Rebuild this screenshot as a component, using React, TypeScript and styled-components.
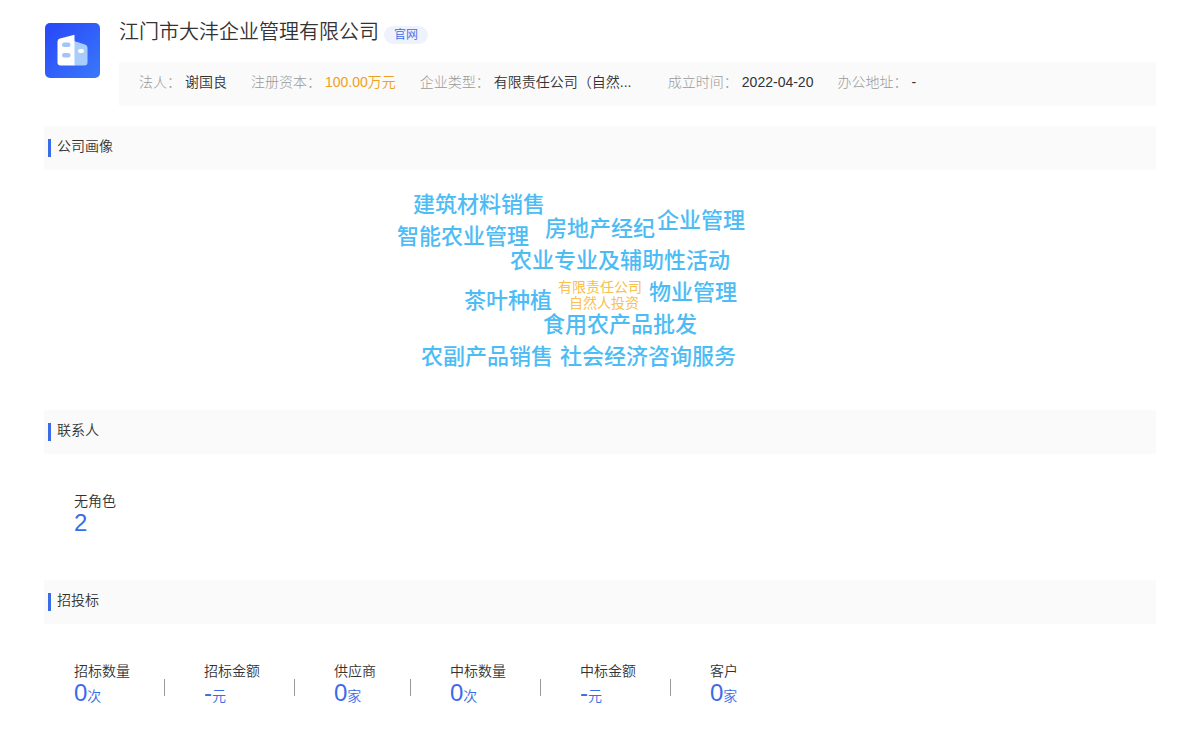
import React from "react";
import styled, { createGlobalStyle } from "styled-components";

const GlobalStyle = createGlobalStyle`
  *, *::before, *::after { box-sizing: border-box; }
  body {
    margin: 0;
    background: #fff;
    color: #333;
    font: 14px/20px "Liberation Sans", "Noto Sans CJK SC", sans-serif;
    font-weight: 350;
  }
  h1, h2, p, dl, dt, dd, ul { margin: 0; padding: 0; font-weight: 350; }
`;

const Page = styled.main`
  padding: 20px 44px;
`;

const Header = styled.header`
  display: flex;
  align-items: flex-start;
  gap: 19px;
  padding-left: 1px;
`;

const Logo = styled.svg`
  flex: none;
  width: 55px;
  height: 55px;
  margin-top: 3px;
`;

const Summary = styled.div`
  flex: 1;
  min-width: 0;
`;

const TitleRow = styled.div`
  display: flex;
  align-items: center;
  gap: 5px;
  height: 30px;
  margin-bottom: 12px;
`;

const CompanyName = styled.h1`
  font-size: 20px;
  line-height: 24px;
  padding-bottom: 6px;
`;

const SiteLink = styled.a`
  padding: 0 10px;
  border-radius: 9px;
  background: #edf2fd;
  color: #3a6be8;
  font-size: 12px;
  line-height: 18px;
  text-decoration: none;
`;

const Facts = styled.dl`
  display: flex;
  flex-wrap: wrap;
  column-gap: 24px;
  padding: 10px 20px 14px;
  background: #fafafa;
`;

const Fact = styled.div`
  display: flex;
  gap: 4px;
`;

const FactLabel = styled.dt`
  color: #999;
  && { font-weight: 300; }
`;

const FactValue = styled.dd<{ $accent?: boolean; $fixed?: boolean }>`
  width: ${(p) => (p.$fixed ? "150px" : "auto")};
  white-space: nowrap;
  color: ${(p) => (p.$accent ? "#f0a020" : "#333")};
`;

const Section = styled.section`
  margin-top: 20px;
`;

const SectionTitle = styled.h2`
  display: flex;
  align-items: center;
  height: 44px;
  padding-left: 4px;
  background: #fafafa;
  font-size: 14px;

  &::before {
    content: "";
    width: 3px;
    height: 18px;
    margin-right: 6px;
    background: #3a6be8;
  }

  span { padding-bottom: 4px; }
`;

const Cloud = styled.div`
  position: relative;
  width: 408px;
  height: 220px;
  margin: 0 auto;
`;

const Word = styled.span<{ $x: number; $y: number }>`
  position: absolute;
  left: ${(p) => p.$x}px;
  top: ${(p) => p.$y}px;
  color: #4dbcf5;
  font-size: 22px;
  line-height: 32px;
  font-weight: 500;
  white-space: nowrap;
`;

const CoreWord = styled(Word)`
  color: #f9c04d;
  font-size: 14px;
  line-height: 16px;
  font-weight: 400;
  text-align: center;
  white-space: pre;
`;

const Stats = styled.dl`
  display: flex;
  flex-wrap: wrap;
  min-height: 106px;
  padding: 36px 30px 20px;
`;

const Stat = styled.div`
  display: flex;
  align-items: flex-start;

  & + &::before {
    content: "";
    width: 1px;
    height: 17px;
    margin: 19px 39px 0 34px;
    background: #999;
  }
`;

const StatLabel = styled.dt`
  padding-top: 1px;
  line-height: 20px;
`;

const StatValue = styled.dd`
  color: #3a6be8;
  line-height: 24px;
`;

const Figure = styled.span`
  font-size: 24px;
`;

const words = [
  { text: "建筑材料销售", x: 17, y: 19 },
  { text: "企业管理", x: 261, y: 35 },
  { text: "房地产经纪", x: 149, y: 43 },
  { text: "智能农业管理", x: 1, y: 51 },
  { text: "农业专业及辅助性活动", x: 114, y: 75 },
  { text: "物业管理", x: 253, y: 107 },
  { text: "茶叶种植", x: 68, y: 115 },
  { text: "食用农产品批发", x: 147, y: 139 },
  { text: "农副产品销售", x: 25, y: 171 },
  { text: "社会经济咨询服务", x: 164, y: 171 },
];

const facts = [
  { label: "法人", value: "谢国良" },
  { label: "注册资本", value: "100.00万元", accent: true },
  { label: "企业类型", value: "有限责任公司（自然...", fixed: true },
  { label: "成立时间", value: "2022-04-20" },
  { label: "办公地址", value: "-" },
];

type StatItem = { label: string; value: string; unit?: string };

const contacts: StatItem[] = [{ label: "无角色", value: "2" }];

const bids: StatItem[] = [
  { label: "招标数量", value: "0", unit: "次" },
  { label: "招标金额", value: "-", unit: "元" },
  { label: "供应商", value: "0", unit: "家" },
  { label: "中标数量", value: "0", unit: "次" },
  { label: "中标金额", value: "-", unit: "元" },
  { label: "客户", value: "0", unit: "家" },
];

function StatList({ items }: { items: StatItem[] }) {
  return (
    <Stats>
      {items.map((item) => (
        <Stat key={item.label}>
          <div>
            <StatLabel>{item.label}</StatLabel>
            <StatValue>
              <Figure>{item.value}</Figure>
              {item.unit}
            </StatValue>
          </div>
        </Stat>
      ))}
    </Stats>
  );
}

function CompanyLogo() {
  return (
    <Logo viewBox="0 0 55 55" aria-hidden="true">
      <defs>
        <linearGradient id="tile" x1="0" y1="0" x2="1" y2="1">
          <stop offset="0" stopColor="#2747f8" />
          <stop offset="1" stopColor="#3a78fa" />
        </linearGradient>
      </defs>
      <rect width="55" height="55" rx="5" fill="url(#tile)" />
      <path d="M29 18l11 3.6q2.500.8 2.500 3V39.500q0 3-3 3H29z" fill="#a9cdfb" />
      <path d="M15 15.500L29.500 11.700V42.500H15.500q-3 0-3-3V18.500q0-2.300 2.500-3z" fill="#fff" />
      <rect x="17" y="19.500" width="8.500" height="4.500" rx="2.250" fill="#a4c4f8" />
      <rect x="17" y="30" width="8.500" height="4.500" rx="2.250" fill="#a4c4f8" />
      <rect x="33" y="26" width="6" height="4" rx="2" fill="#fff" />
    </Logo>
  );
}

export default function App() {
  return (
    <>
      <GlobalStyle />
      <Page>
        <Header>
          <CompanyLogo />
          <Summary>
            <TitleRow>
              <CompanyName>江门市大沣企业管理有限公司</CompanyName>
              <SiteLink href="#">官网</SiteLink>
            </TitleRow>
            <Facts>
              {facts.map((f) => (
                <Fact key={f.label}>
                  <FactLabel>{f.label}：</FactLabel>
                  <FactValue $accent={f.accent} $fixed={f.fixed}>
                    {f.value}
                  </FactValue>
                </Fact>
              ))}
            </Facts>
          </Summary>
        </Header>

        <Section>
          <SectionTitle>
            <span>公司画像</span>
          </SectionTitle>
          <Cloud>
            {words.map((w) => (
              <Word key={w.text} $x={w.x} $y={w.y}>
                {w.text}
              </Word>
            ))}
            <CoreWord $x={162} $y={109}>
              {"有限责任公司\n  自然人投资"}
            </CoreWord>
          </Cloud>
        </Section>

        <Section>
          <SectionTitle>
            <span>联系人</span>
          </SectionTitle>
          <StatList items={contacts} />
        </Section>

        <Section>
          <SectionTitle>
            <span>招投标</span>
          </SectionTitle>
          <StatList items={bids} />
        </Section>
      </Page>
    </>
  );
}
